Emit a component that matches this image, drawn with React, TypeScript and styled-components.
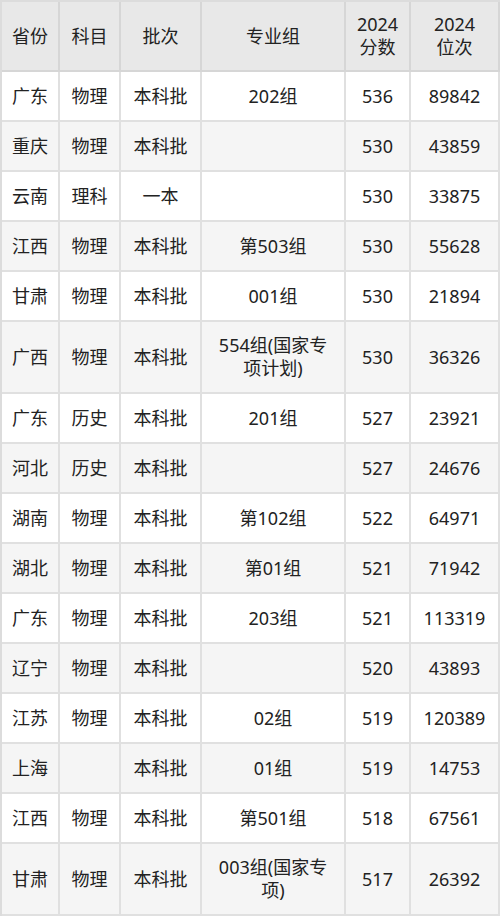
import React from 'react'
import styled, { createGlobalStyle } from 'styled-components'

const GlobalStyle = createGlobalStyle`
  html, body {
    margin: 0;
    padding: 0;
    background: #ffffff;
  }
`

interface ScoreRow {
  province: string
  subject: string
  batch: string
  group: string
  score: string
  rank: string
}

const rows: ScoreRow[] = [
  { province: '广东', subject: '物理', batch: '本科批', group: '202组', score: '536', rank: '89842' },
  { province: '重庆', subject: '物理', batch: '本科批', group: '', score: '530', rank: '43859' },
  { province: '云南', subject: '理科', batch: '一本', group: '', score: '530', rank: '33875' },
  { province: '江西', subject: '物理', batch: '本科批', group: '第503组', score: '530', rank: '55628' },
  { province: '甘肃', subject: '物理', batch: '本科批', group: '001组', score: '530', rank: '21894' },
  { province: '广西', subject: '物理', batch: '本科批', group: '554组(国家专项计划)', score: '530', rank: '36326' },
  { province: '广东', subject: '历史', batch: '本科批', group: '201组', score: '527', rank: '23921' },
  { province: '河北', subject: '历史', batch: '本科批', group: '', score: '527', rank: '24676' },
  { province: '湖南', subject: '物理', batch: '本科批', group: '第102组', score: '522', rank: '64971' },
  { province: '湖北', subject: '物理', batch: '本科批', group: '第01组', score: '521', rank: '71942' },
  { province: '广东', subject: '物理', batch: '本科批', group: '203组', score: '521', rank: '113319' },
  { province: '辽宁', subject: '物理', batch: '本科批', group: '', score: '520', rank: '43893' },
  { province: '江苏', subject: '物理', batch: '本科批', group: '02组', score: '519', rank: '120389' },
  { province: '上海', subject: '', batch: '本科批', group: '01组', score: '519', rank: '14753' },
  { province: '江西', subject: '物理', batch: '本科批', group: '第501组', score: '518', rank: '67561' },
  { province: '甘肃', subject: '物理', batch: '本科批', group: '003组(国家专项)', score: '517', rank: '26392' }
]

// widths of the columns, the 2px left border of the table makes up the rest
const columnWidths = [58, 61, 81, 144, 65, 89]

export default function App() {
  return (
    <>
      <GlobalStyle />
      <S.Table>
        <colgroup>
          {columnWidths.map((w, i) => (
            <col key={`col-${i}`} style={{ width: w }} />
          ))}
        </colgroup>
        <thead>
          <S.HeadRow>
            <S.HeadCell>省份</S.HeadCell>
            <S.HeadCell>科目</S.HeadCell>
            <S.HeadCell>批次</S.HeadCell>
            <S.HeadCell>专业组</S.HeadCell>
            <S.HeadCell>
              2024
              <br />
              分数
            </S.HeadCell>
            <S.HeadCell>
              2024
              <br />
              位次
            </S.HeadCell>
          </S.HeadRow>
        </thead>
        <tbody>
          {rows.map((row, i) => (
            <S.BodyRow key={`row-${i}`} $striped={i % 2 === 1} $tall={row.group.length > 8}>
              <S.Cell>{row.province}</S.Cell>
              <S.Cell>{row.subject}</S.Cell>
              <S.Cell>{row.batch}</S.Cell>
              <S.GroupCell>{row.group}</S.GroupCell>
              <S.Cell>{row.score}</S.Cell>
              <S.Cell>{row.rank}</S.Cell>
            </S.BodyRow>
          ))}
        </tbody>
      </S.Table>
    </>
  )
}

const S = {
  Table: styled.table`
    width: 500px;
    table-layout: fixed;
    border-collapse: separate;
    border-spacing: 0;
    border-top: 2px solid #dcdcdc;
    border-left: 2px solid #dcdcdc;
    font-family: 'Noto Sans', 'Noto Sans CJK SC', sans-serif;
    font-size: 18px;
    line-height: 23px;
    color: #222222;
  `,
  HeadRow: styled.tr`
    height: 70px;
    background: #e8e8e8;
  `,
  HeadCell: styled.th`
    box-sizing: border-box;
    font-weight: 400;
    text-align: center;
    vertical-align: middle;
    padding: 0 4px;
    border-right: 2px solid #d6d6d6;
    border-bottom: 2px solid #d6d6d6;
  `,
  BodyRow: styled.tr<{ $striped: boolean; $tall: boolean }>`
    height: ${p => (p.$tall ? 72 : 50)}px;
    background: ${p => (p.$striped ? '#f5f5f5' : '#ffffff')};
  `,
  Cell: styled.td`
    box-sizing: border-box;
    text-align: center;
    vertical-align: middle;
    padding: 0 4px;
    border-right: 2px solid #e0e0e0;
    border-bottom: 2px solid #e0e0e0;
    white-space: nowrap;
  `,
  GroupCell: styled.td`
    box-sizing: border-box;
    text-align: center;
    vertical-align: middle;
    padding: 0 12px;
    border-right: 2px solid #e0e0e0;
    border-bottom: 2px solid #e0e0e0;
  `
}
